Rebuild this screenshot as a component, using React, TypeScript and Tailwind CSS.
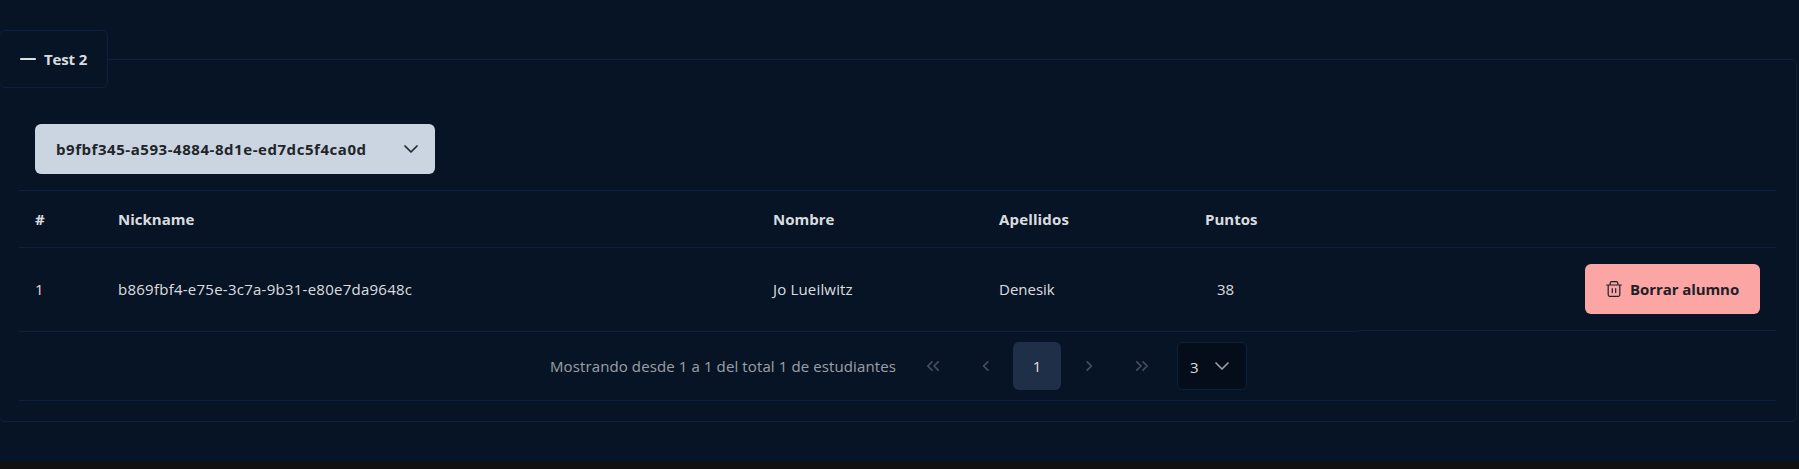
import React from "react";

type StrokeProps = { d: string; className?: string };

function MinusIcon() {
  return (
    <svg width="16" height="16" viewBox="0 0 14 14" fill="currentColor">
      <path d="M13.2222 7.77778H0.777778C0.571498 7.77778 0.373667 7.69584 0.227806 7.54998C0.0819442 7.40412 0 7.20629 0 7.00001C0 6.79373 0.0819442 6.5959 0.227806 6.45003C0.373667 6.30417 0.571498 6.22223 0.777778 6.22223H13.2222C13.4285 6.22223 13.6263 6.30417 13.7722 6.45003C13.9181 6.5959 14 6.79373 14 7.00001C14 7.20629 13.9181 7.40412 13.7722 7.54998C13.6263 7.69584 13.4285 7.77778 13.2222 7.77778Z" />
    </svg>
  );
}

function Stroke({ d, className }: StrokeProps) {
  return (
    <svg width="16" height="16" viewBox="0 0 16 16" fill="none" stroke="currentColor" strokeWidth="1.7" strokeLinecap="round" strokeLinejoin="round" className={className}>
      <path d={d} />
    </svg>
  );
}

function TrashIcon() {
  return (
    <svg width="16" height="16" viewBox="0 0 16 16" fill="none" stroke="currentColor" strokeWidth="1.2" strokeLinecap="round" strokeLinejoin="round">
      <path d="M0.7 4H15.3M2.2 4V13.8A1.6 1.6 0 0 0 3.8 15.4H12.2A1.6 1.6 0 0 0 13.8 13.8V4M4.2 4V2.2A1.6 1.6 0 0 1 5.8 0.6H10.2A1.6 1.6 0 0 1 11.8 2.2V4M6.3 7.6V11.6M9.7 7.6V11.6" />
    </svg>
  );
}

const chevronDown = "M2 5L8 11L14 5";

export default function App() {
  return (
    <div className="flex h-[469px] w-full flex-col overflow-hidden bg-[#111111] font-['Open_Sans','Noto_Sans',sans-serif] text-base leading-6 text-white/87">
      <main className="h-[462px] bg-[#071426] pt-[30px]">
        <fieldset className="-ml-px mr-[2px] h-[392px] rounded-md border border-[#0b213f]">
          <legend className="-ml-px flex h-[58px] w-[109px] items-center gap-2 rounded-md border border-[#0b213f] pl-5 font-bold">
            <MinusIcon />
            <span className="whitespace-nowrap text-[15px] tracking-[-0.15px]">Test 2</span>
          </legend>

          <div className="ml-[19px] mr-[20px] pt-[36px]">
            <div className="ml-4 flex h-[50px] w-[400px] rounded-md bg-[#cbd5e1] text-[#212529]">
              <button className="w-[352px] pl-[21px] text-left text-[15px] font-bold tracking-[0.55px] whitespace-nowrap">
                b9fbf345-a593-4884-8d1e-ed7dc5f4ca0d
              </button>
              <button className="flex w-12 items-center justify-center">
                <Stroke d={chevronDown} />
              </button>
            </div>

            <div className="mt-4 border-y border-[#0b213f]">
              <div className="grid h-[57px] grid-cols-[83px_655px_226px_206px_1fr] items-center border-b border-[#0b213f] pl-4 text-[15px] font-bold">
                <span>#</span>
                <span>Nickname</span>
                <span>Nombre</span>
                <span className="tracking-[0.15px]">Apellidos</span>
                <span>Puntos</span>
              </div>
              <div className="flex h-[84px] text-[15px]">
                <div className="grid h-[84px] flex-1 grid-cols-[83px_655px_226px_206px_1fr] items-center border-b border-[#0b213f] pb-px pl-4">
                  <span>1</span>
                  <span className="tracking-[0.25px]">b869fbf4-e75e-3c7a-9b31-e80e7da9648c</span>
                  <span className="tracking-[0.17px]">Jo Lueilwitz</span>
                  <span>Denesik</span>
                  <span className="pl-3">38</span>
                </div>
                <div className="flex h-[83px] w-[417px] items-center justify-end border-b border-[#0b213f] pr-4">
                  <button className="flex h-[50px] w-[175px] items-center gap-2 rounded-md bg-[#fca5a5] pl-[21px] font-bold whitespace-nowrap text-[#1c2127]">
                    <TrashIcon />
                    <span className="tracking-[-0.08px]">Borrar alumno</span>
                  </button>
                </div>
              </div>
              <div className="flex h-[68px] items-center pl-[531px] text-white/60">
                <span className="w-[359px] text-[15px] tracking-[0.11px] whitespace-nowrap">
                  Mostrando desde 1 a 1 del total 1 de estudiantes
                </span>
                <span className="flex w-[48px] justify-center text-white/25">
                  <Stroke d="M7 3.800L2.800 8L7 12.200M13.200 3.800L9 8L13.200 12.200" />
                </span>
                <span className="ml-1 flex w-[48px] justify-center text-white/25">
                  <Stroke d="M10.800 3.800L6.600 8L10.800 12.200" />
                </span>
                <span className="ml-1 flex size-12 items-center justify-center rounded-md bg-[#1f2f47] text-[15px] text-white/87">1</span>
                <span className="ml-1 flex w-[48px] justify-center text-white/25">
                  <Stroke d="M6.200 3.800L10.400 8L6.200 12.200" />
                </span>
                <span className="ml-1 flex w-[48px] justify-center text-white/25">
                  <Stroke d="M3.800 3.800L8 8L3.800 12.200M10 3.800L14.200 8L10 12.200" />
                </span>
                <span className="ml-[12px] flex h-12 w-[70px] items-center rounded-md border border-[#0b213f] bg-[#040d19] pl-3 text-[15px] text-white/87">
                  <span className="w-[24px] pt-0.5">3</span>
                  <Stroke d={chevronDown} className="text-white/60" />
                </span>
              </div>
            </div>
          </div>
        </fieldset>
      </main>
    </div>
  );
}
